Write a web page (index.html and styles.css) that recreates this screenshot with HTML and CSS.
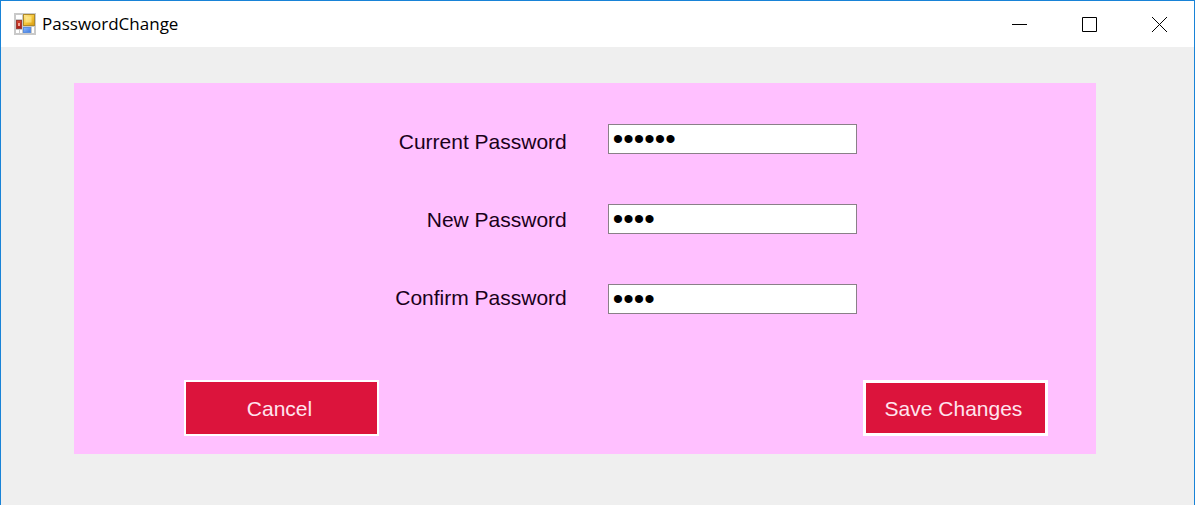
FILE: index.html
```html
<!DOCTYPE html>
<html lang="en">
<head>
<meta charset="utf-8">
<title>PasswordChange</title>
<link rel="stylesheet" href="styles.css">
</head>
<body>
<div class="window">
  <header class="titlebar">
    <svg class="app-icon" viewBox="0 0 22 22" width="22" height="22" aria-hidden="true">
      <defs>
        <linearGradient id="gold" x1="0" y1="0" x2="1" y2="1"><stop offset="0" stop-color="#ffe99a"/><stop offset="0.5" stop-color="#f5c63a"/><stop offset="1" stop-color="#d79a10"/></linearGradient>
        <linearGradient id="red" x1="0" y1="0" x2="0" y2="1"><stop offset="0" stop-color="#d8452f"/><stop offset="1" stop-color="#a81c16"/></linearGradient>
        <linearGradient id="blue" x1="0" y1="0" x2="1" y2="1"><stop offset="0" stop-color="#8dbcff"/><stop offset="1" stop-color="#3f78dc"/></linearGradient>
      </defs>
      <rect width="22" height="22" fill="#c9c9c9"/>
      <rect x="2" y="2" width="6" height="4" fill="#fff"/>
      <rect x="2" y="17" width="3" height="3" fill="#fff"/>
      <rect x="6" y="17" width="2" height="3" fill="#fff"/>
      <rect x="18" y="14" width="2" height="6" fill="#fff"/>
      <rect x="9.5" y="1.5" width="11" height="11" fill="url(#gold)" stroke="#b08a28"/>
      <rect x="11.5" y="3.5" width="6" height="6" fill="#fff3a8" opacity=".55"/>
      <rect x="2.5" y="7.5" width="5" height="8" fill="url(#red)" stroke="#9c3a34"/>
      <rect x="4" y="10" width="2" height="3" fill="#f3a698"/>
      <rect x="9.5" y="14.5" width="7" height="5" fill="url(#blue)" stroke="#5c8fe0"/>
    </svg>
    <span class="title">PasswordChange</span>
    <div class="controls">
      <button class="control" type="button" aria-label="Minimize"><svg viewBox="0 0 15 15" width="15" height="15"><path d="M0 7.500H15"/></svg></button>
      <button class="control" type="button" aria-label="Maximize"><svg viewBox="0 0 15 15" width="15" height="15"><path d="M.5.5h14v14H.5z"/></svg></button>
      <button class="control" type="button" aria-label="Close"><svg viewBox="0 0 15 15" width="15" height="15"><path d="M0 0l15 15M15 0L0 15"/></svg></button>
    </div>
  </header>
  <main class="client">
    <form class="panel">
      <div class="fields">
        <div class="labels">
          <label for="current">Current Password</label>
          <label for="new">New Password</label>
          <label for="confirm">Confirm Password</label>
        </div>
        <div class="inputs">
          <input id="current" type="password" value="secret">
          <input id="new" type="password" value="pass">
          <input id="confirm" type="password" value="pass">
        </div>
      </div>
      <div class="actions">
        <button class="action cancel" type="button">Cancel</button>
        <button class="action save" type="submit">Save Changes</button>
      </div>
    </form>
  </main>
</div>
</body>
</html>
```
FILE: styles.css
```css
* {
  box-sizing: border-box;
}

body {
  margin: 0;
  font-family: "Liberation Sans", Arial, sans-serif;
}

.window {
  display: flex;
  flex-direction: column;
  min-height: 100vh;
  border: 1px solid #1883d7;
  border-bottom: 0;
  background: #efefef;
}

.titlebar {
  display: flex;
  align-items: center;
  height: 46px;
  padding-left: 13px;
  background: #fff;
}

.app-icon {
  flex: none;
}

.title {
  flex: 1;
  margin-left: 6px;
  font: 17px/24px "Open Sans", sans-serif;
  color: #000;
}

.controls {
  display: flex;
}

.control {
  display: flex;
  align-items: center;
  justify-content: center;
  width: 70px;
  height: 46px;
  padding: 0;
  border: 0;
  background: none;
}

.control svg {
  fill: none;
  stroke: #000;
}

.client {
  flex: 1;
  padding: 36px 98px 50px 73px;
}

.panel {
  padding: 41px 48px 18px 110px;
  background: #ffc0ff;
}

.fields {
  display: flex;
  justify-content: center;
  gap: 41px;
  padding-left: 20px;
}

.labels {
  display: grid;
  gap: 54px;
  align-content: start;
  justify-items: end;
  padding-top: 6px;
  font-size: 21px;
  line-height: 24px;
  color: #1a001a;
}

.inputs {
  display: grid;
  gap: 50px;
}

.inputs input {
  width: 249px;
  height: 30px;
  padding: 0 4px;
  border: 1px solid #8a8088;
  border-radius: 0;
  outline: 0;
  background: #fff;
  font: 30px/28px "Liberation Sans", Arial, sans-serif;
  color: #000;
}

.actions {
  display: flex;
  justify-content: space-between;
  margin-top: 66px;
}

.action {
  height: 56px;
  padding: 2px 4px 0 0;
  border: 2px solid #fff;
  background: #dc143c;
  font: 21px/24px "Liberation Sans", Arial, sans-serif;
  color: #ffe4ee;
}

.cancel {
  width: 195px;
}

.save {
  width: 185px;
  border-width: 3px;
}
```
